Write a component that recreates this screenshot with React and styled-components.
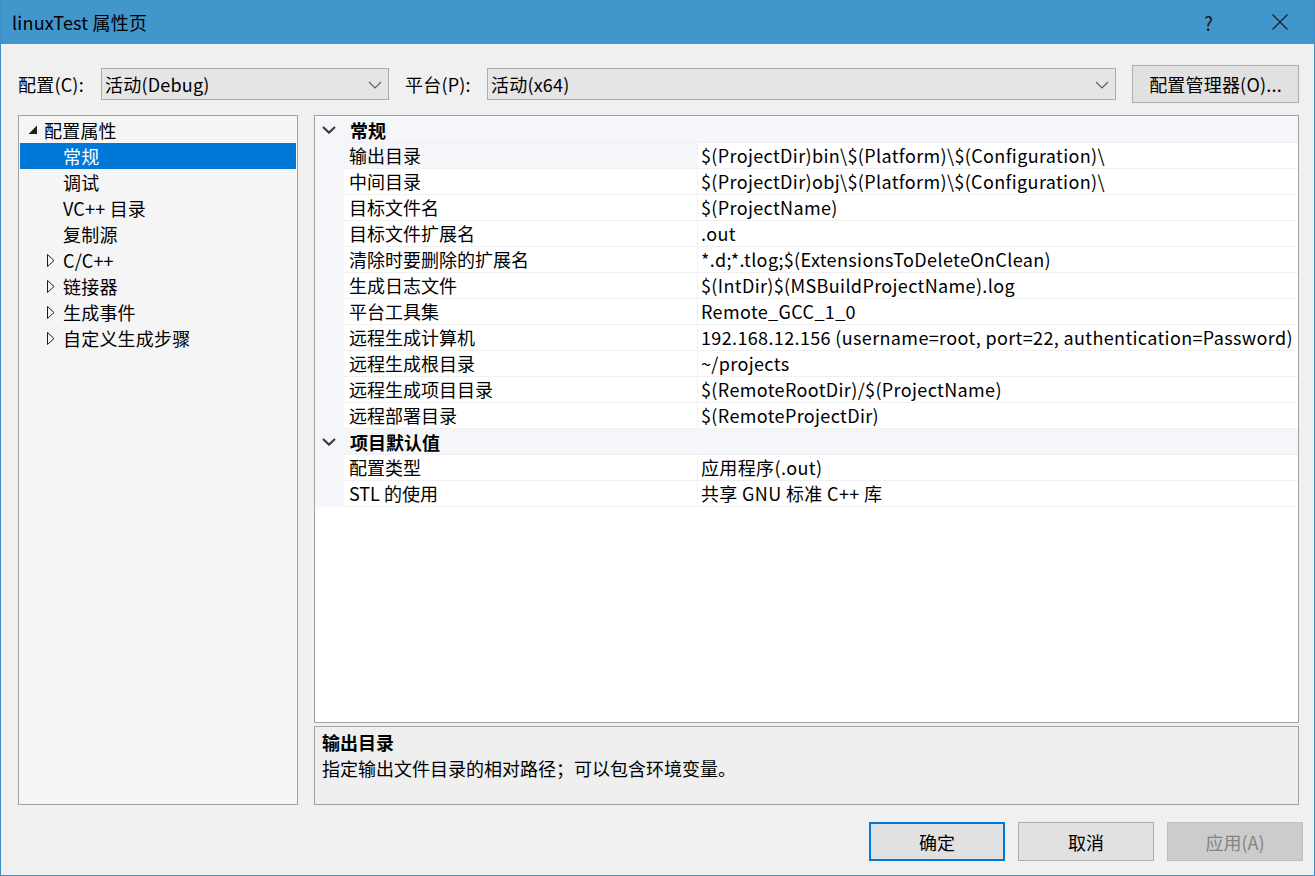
import React from "react";
import styled, { createGlobalStyle } from "styled-components";

const GlobalStyle = createGlobalStyle`
  html, body {
    margin: 0;
    padding: 0;
    background: #f0f0f0;
  }
  body {
    font-family: "Noto Sans CJK SC", "Noto Sans", sans-serif;
    font-size: 18px;
    color: #000;
  }
  * {
    box-sizing: border-box;
  }
`;

const tree = [
  { label: "配置属性", level: 0, open: true },
  { label: "常规", level: 1, selected: true },
  { label: "调试", level: 1 },
  { label: "VC++ 目录", level: 1 },
  { label: "复制源", level: 1 },
  { label: "C/C++", level: 1, closed: true },
  { label: "链接器", level: 1, closed: true },
  { label: "生成事件", level: 1, closed: true },
  { label: "自定义生成步骤", level: 1, closed: true },
];

const sections = [
  {
    title: "常规",
    rows: [
      ["输出目录", "$(ProjectDir)bin\\$(Platform)\\$(Configuration)\\"],
      ["中间目录", "$(ProjectDir)obj\\$(Platform)\\$(Configuration)\\"],
      ["目标文件名", "$(ProjectName)"],
      ["目标文件扩展名", ".out"],
      ["清除时要删除的扩展名", "*.d;*.tlog;$(ExtensionsToDeleteOnClean)"],
      ["生成日志文件", "$(IntDir)$(MSBuildProjectName).log"],
      ["平台工具集", "Remote_GCC_1_0"],
      ["远程生成计算机", "192.168.12.156 (username=root, port=22, authentication=Password)"],
      ["远程生成根目录", "~/projects"],
      ["远程生成项目目录", "$(RemoteRootDir)/$(ProjectName)"],
      ["远程部署目录", "$(RemoteProjectDir)"],
    ],
  },
  {
    title: "项目默认值",
    rows: [
      ["配置类型", "应用程序(.out)"],
      ["STL 的使用", "共享 GNU 标准 C++ 库"],
    ],
  },
];

export default function App() {
  return (
    <>
      <GlobalStyle />
      <Window>
        <TitleBar>
          <Title>linuxTest 属性页</Title>
          <HelpMark>?</HelpMark>
          <CloseIcon width="16" height="16" viewBox="0 0 16 16">
            <path d="M0.5 0.5 L15.5 15.5 M15.5 0.5 L0.5 15.5" stroke="#1a1a1a" strokeWidth="1.1" />
          </CloseIcon>
        </TitleBar>

        <Body>
          <ConfigRow>
            <FieldLabel $width={83}>配置(C):</FieldLabel>
            <Select $width={288}>
              <span>活动(Debug)</span>
              <Chevron />
            </Select>
            <FieldLabel $width={82} $gap={16}>平台(P):</FieldLabel>
            <Select $grow>
              <span>活动(x64)</span>
              <Chevron />
            </Select>
            <ManagerButton>配置管理器(O)...</ManagerButton>
          </ConfigRow>

          <Main>
            <TreePanel>
              {tree.map((item) => (
                <TreeRow key={item.label} $level={item.level} $selected={item.selected}>
                  <Expander>
                    {item.open && (
                      <svg width="10" height="10" viewBox="0 0 10 10">
                        <polygon points="9,0.5 9,9 0.5,9" fill="#1e1e1e" />
                      </svg>
                    )}
                    {item.closed && (
                      <svg width="8" height="13" viewBox="0 0 8 13">
                        <polygon points="0.5,0.5 7,6.5 0.5,12.5" fill="none" stroke="#1e1e1e" strokeWidth="1" />
                      </svg>
                    )}
                  </Expander>
                  {item.label}
                </TreeRow>
              ))}
            </TreePanel>

            <RightColumn>
              <PropertyGrid>
                {sections.map((section) => (
                  <React.Fragment key={section.title}>
                    <CategoryRow>
                      <MarginCell>
                        <svg width="14" height="8" viewBox="0 0 14 8">
                          <polyline points="1,1 7,6.6 13,1" fill="none" stroke="#3c3c3c" strokeWidth="2.2" />
                        </svg>
                      </MarginCell>
                      <CategoryTitle>{section.title}</CategoryTitle>
                    </CategoryRow>
                    {section.rows.map(([name, value], i) => (
                      <PropRow key={name}>
                        <MarginCell />
                        <NameCell $selected={section.title === "常规" && i === 0}>{name}</NameCell>
                        <ValueCell>{value}</ValueCell>
                      </PropRow>
                    ))}
                  </React.Fragment>
                ))}
              </PropertyGrid>

              <Description>
                <DescTitle>输出目录</DescTitle>
                <DescText>指定输出文件目录的相对路径；可以包含环境变量。</DescText>
              </Description>
            </RightColumn>
          </Main>

          <ButtonRow>
            <DialogButton $primary>确定</DialogButton>
            <DialogButton>取消</DialogButton>
            <DialogButton disabled>应用(A)</DialogButton>
          </ButtonRow>
        </Body>
      </Window>
    </>
  );
}

function Chevron() {
  return (
    <ChevronSvg width="14" height="8" viewBox="0 0 14 8">
      <polyline points="1,1 7,7 13,1" fill="none" stroke="#5a5a5a" strokeWidth="1.1" />
    </ChevronSvg>
  );
}

const Window = styled.div`
  width: 1315px;
  height: 876px;
  border: 1px solid #3d8fc6;
  border-top: none;
  background: #f0f0f0;
  display: flex;
  flex-direction: column;
  overflow: hidden;
`;

const TitleBar = styled.div`
  height: 44px;
  margin: 0 -1px;
  background: #4196cb;
  display: flex;
  align-items: center;
  padding-left: 12px;
`;

const Title = styled.div`
  flex: 1;
  font-size: 18px;
  color: #000;
  padding-bottom: 1px;
  letter-spacing: 0.2px;
`;

const HelpMark = styled.div`
  font-size: 19px;
  color: #1a1a1a;
  margin-right: 59px;
`;

const CloseIcon = styled.svg`
  margin-right: 27px;
`;

const Body = styled.div`
  flex: 1;
  padding: 21px 15px 0 17px;
  display: flex;
  flex-direction: column;
`;

const ConfigRow = styled.div`
  height: 38px;
  display: flex;
  align-items: center;
  letter-spacing: 0.2px;
`;

const FieldLabel = styled.div`
  width: ${(p) => p.$width}px;
  margin-left: ${(p) => p.$gap || 0}px;
  flex-shrink: 0;
  white-space: nowrap;
`;

const Select = styled.div`
  height: 32px;
  width: ${(p) => (p.$grow ? "auto" : `${p.$width}px`)};
  flex: ${(p) => (p.$grow ? 1 : "none")};
  background: #e5e5e5;
  border: 1px solid #acacac;
  display: flex;
  align-items: center;
  justify-content: space-between;
  padding: 0 6px 0 3px;
`;

const ChevronSvg = styled.svg`
  margin-top: 1px;
`;

const ManagerButton = styled.div`
  width: 167px;
  height: 38px;
  margin-left: 16px;
  background: #e1e1e1;
  border: 1px solid #adadad;
  display: flex;
  align-items: center;
  justify-content: center;
`;

const Main = styled.div`
  margin-top: 12px;
  height: 690px;
  display: flex;
  gap: 16px;
`;

const TreePanel = styled.div`
  width: 280px;
  flex-shrink: 0;
  background: #f5f5f5;
  border: 1px solid #a0a0a0;
  padding: 1px;
`;

const TreeRow = styled.div`
  height: 26px;
  display: flex;
  align-items: center;
  padding-left: ${(p) => 5 + p.$level * 19}px;
  background: ${(p) => (p.$selected ? "#0078d7" : "transparent")};
  color: ${(p) => (p.$selected ? "#fff" : "#000")};
  white-space: nowrap;
  letter-spacing: 0.2px;
`;

const Expander = styled.span`
  width: 19px;
  height: 26px;
  flex-shrink: 0;
  display: flex;
  align-items: center;
  padding-left: 3px;
`;

const RightColumn = styled.div`
  flex: 1;
  display: flex;
  flex-direction: column;
  gap: 3px;
`;

const PropertyGrid = styled.div`
  height: 608px;
  background: #fff;
  border: 1px solid #a0a0a0;
  padding-top: 1px;
  overflow: hidden;
`;

const CategoryRow = styled.div`
  height: 26px;
  display: flex;
  align-items: center;
  background: #f4f6f9;
  border-bottom: 1px solid #eef0f3;
`;

const MarginCell = styled.div`
  width: 29px;
  height: 26px;
  flex-shrink: 0;
  background: #f4f6f9;
  display: flex;
  align-items: center;
  padding-left: 7px;
`;

const CategoryTitle = styled.div`
  font-weight: 700;
  padding-left: 6px;
`;

const PropRow = styled.div`
  height: 26px;
  display: flex;
`;

const NameCell = styled.div`
  width: 354px;
  flex-shrink: 0;
  padding-left: 5px;
  line-height: 25px;
  background: ${(p) => (p.$selected ? "#f4f6f9" : "#fff")};
  border-right: 1px solid #f0f0f0;
  border-bottom: 1px solid #f0f0f0;
  white-space: nowrap;
`;

const ValueCell = styled.div`
  flex: 1;
  padding-left: 3px;
  line-height: 25px;
  letter-spacing: 0.36px;
  border-bottom: 1px solid #f0f0f0;
  white-space: nowrap;
  overflow: hidden;
`;

const Description = styled.div`
  height: 79px;
  background: #efefef;
  border: 1px solid #a0a0a0;
  padding: 2px 7px;
  line-height: 26px;
`;

const DescTitle = styled.div`
  font-weight: 700;
`;

const DescText = styled.div``;

const ButtonRow = styled.div`
  margin-top: 17px;
  margin-right: -4px;
  display: flex;
  justify-content: flex-end;
  gap: 13px;
`;

const DialogButton = styled.div`
  width: 136px;
  height: 39px;
  display: flex;
  align-items: center;
  justify-content: center;
  background: ${(p) => (p.disabled ? "#cccccc" : "#e1e1e1")};
  border: ${(p) => (p.$primary ? "2px solid #0078d7" : p.disabled ? "1px solid #bfbfbf" : "1px solid #adadad")};
  color: ${(p) => (p.disabled ? "#838383" : "#000")};
`;
